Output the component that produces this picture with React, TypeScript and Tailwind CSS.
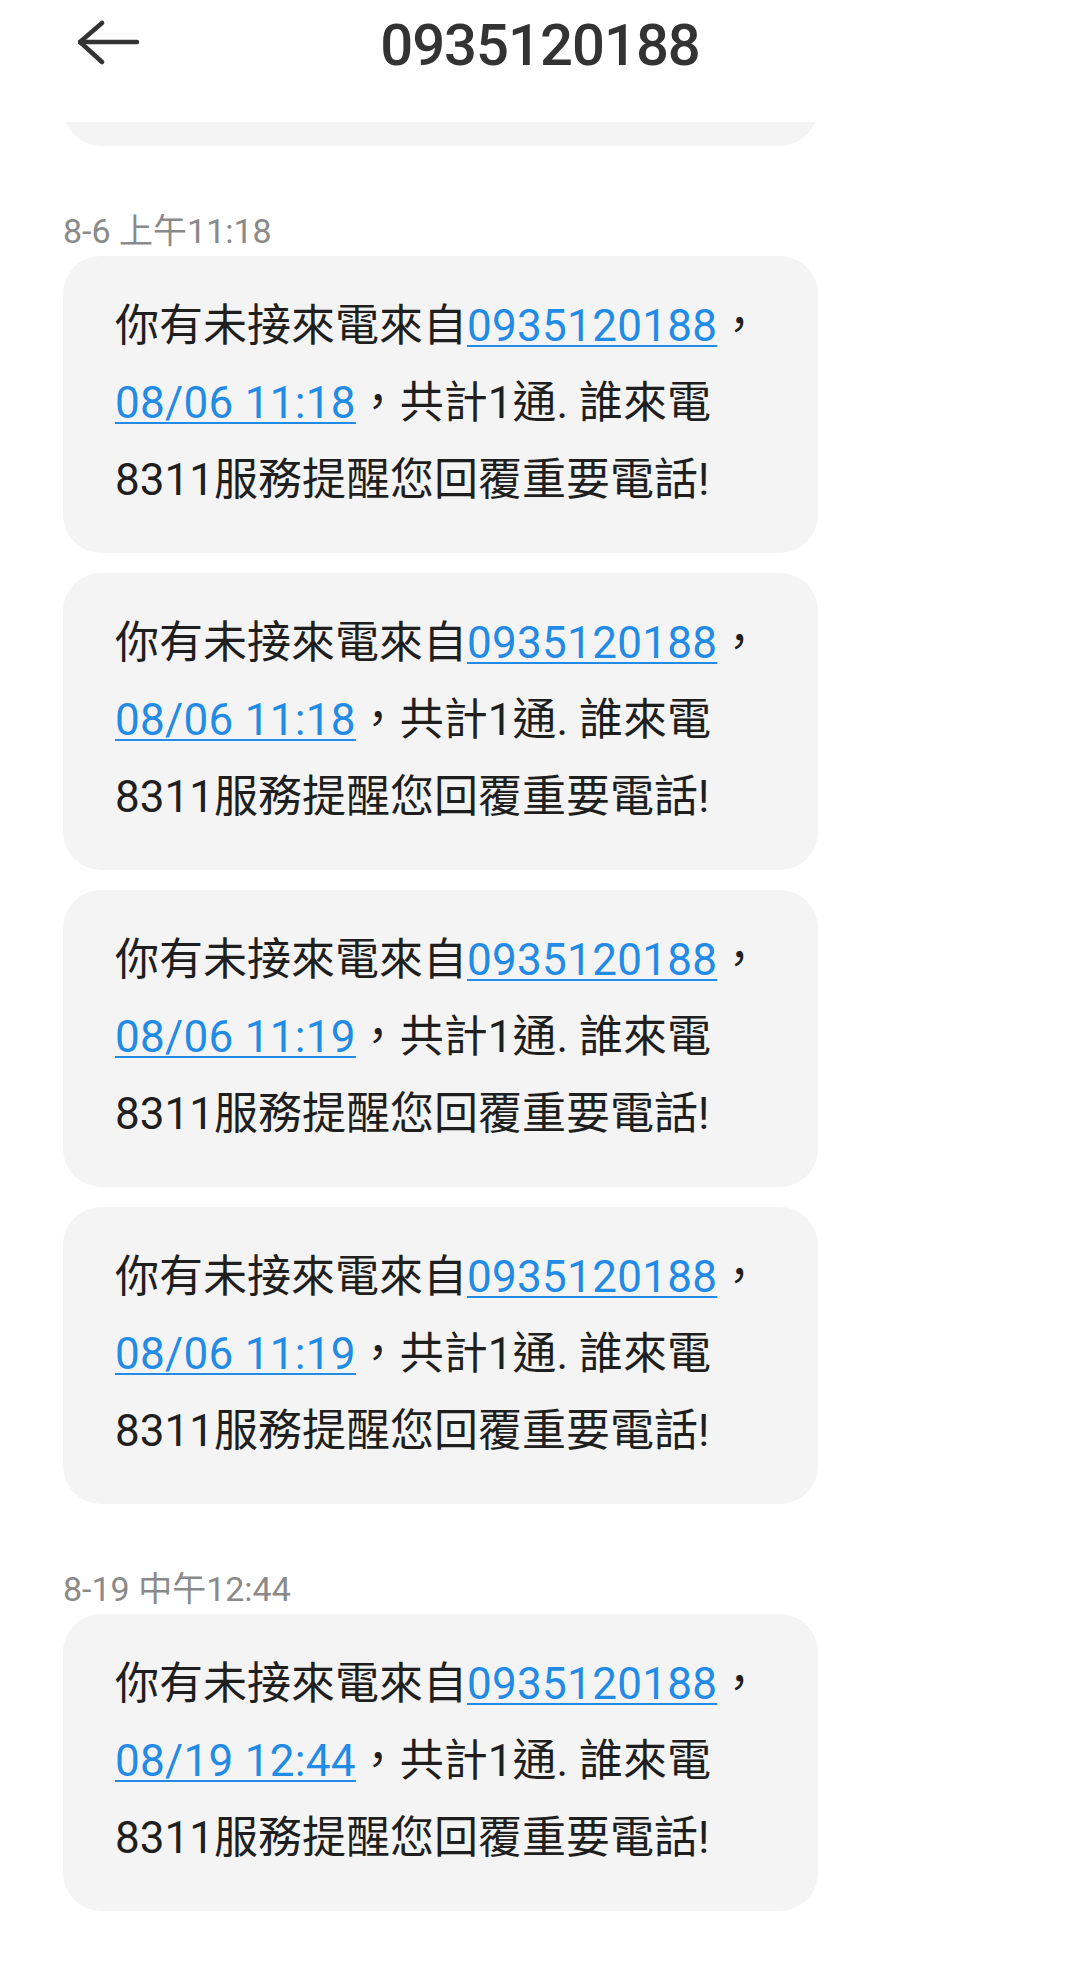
import { Fragment } from 'react';

// 訊息資料
const groups = [
  { stamp: '8-6 上午11:18', times: ['08/06 11:18', '08/06 11:18', '08/06 11:19', '08/06 11:19'] },
  { stamp: '8-19 中午12:44', times: ['08/19 12:44'] },
];

const PHONE = '0935120188';

const linkCls = 'text-[#228be6] underline decoration-2 underline-offset-[4px] tracking-[0.3px]';

function Bubble({ time }: { time: string }) {
  return (
    <div className="ml-[63px] w-[755px] h-[297px] shrink-0 rounded-[38px] bg-[#f4f4f4] pt-[32px] pb-[34px] pl-[52px] text-[44px] leading-[77px] text-[#1f1f1f] whitespace-nowrap">
      你有未接來電來自
      <a className={linkCls}>{PHONE}</a>
      ，
      <br />
      <a className={linkCls}>{time}</a>
      ，共計1通. 誰來電
      <br />
      8311服務提醒您回覆重要電話!
    </div>
  );
}

function BackArrow() {
  return (
    <svg width="62" height="45" viewBox="0 0 62 45" fill="none" stroke="#333333" strokeWidth="4.5" strokeLinecap="round" strokeLinejoin="round">
      <path d="M2 22 H59" />
      <path d="M24 3 L2 22 L24 42" />
    </svg>
  );
}

export default function App() {
  return (
    <div className="min-h-[1984px] w-[1080px] bg-white font-['Roboto','Noto_Sans_CJK_TC',sans-serif]">
      {/* 標題列 */}
      <header className="grid h-[122px] grid-cols-[1fr_auto_1fr] bg-white">
        <div className="pl-[78px] pt-[20px]">
          <BackArrow />
        </div>
        <h1 className="pt-[10px] text-[58px] leading-[70px] font-medium tracking-[-1px] text-[#333333]">{PHONE}</h1>
        <div />
      </header>

      {/* 訊息列表：上一則訊息已捲出畫面，只露出底部 */}
      <main className="flex flex-col">
        <div className="flex h-[24px] flex-col justify-end overflow-hidden">
          <div className="ml-[63px] w-[755px] h-[297px] shrink-0 rounded-[38px] bg-[#f4f4f4]" />
        </div>

        {groups.map((g) => (
          <Fragment key={g.stamp}>
            <div className="mt-[65px] mb-[5px] h-[40px] pl-[63px] text-[34px] leading-[40px] text-[#8a8a8a]">{g.stamp}</div>
            <div className="flex flex-col gap-[20px]">
              {g.times.map((t, i) => (
                <Bubble key={i} time={t} />
              ))}
            </div>
          </Fragment>
        ))}
      </main>
    </div>
  );
}
